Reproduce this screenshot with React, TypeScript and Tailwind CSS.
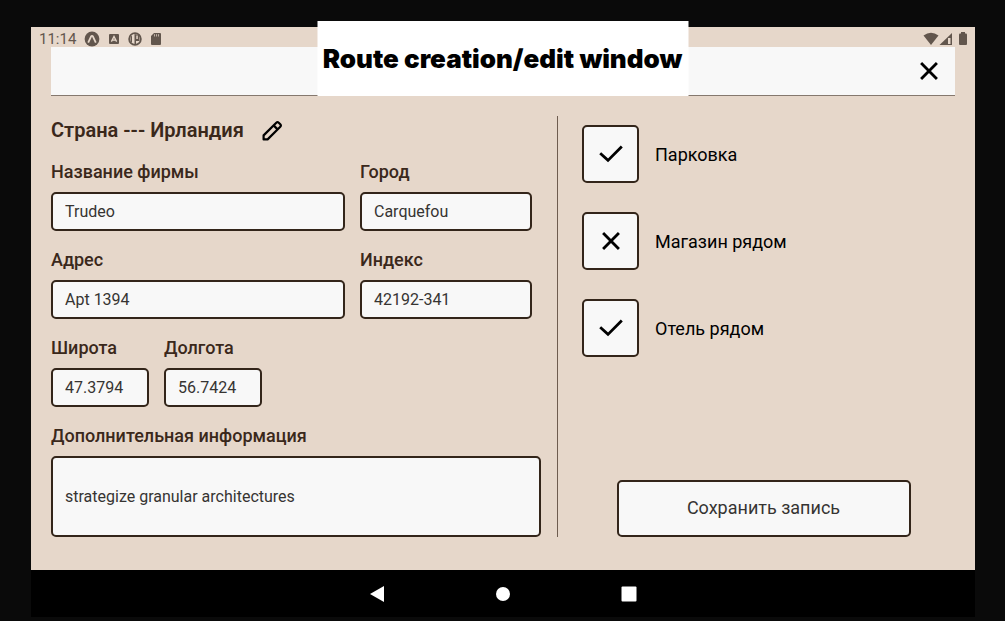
import { useState } from "react";

const FIELD =
  "w-full rounded-[5px] border-2 border-[#33251a] bg-[#f8f8f8] px-3 text-base text-[#363432] outline-none";

type FieldProps = { id: string; label: string; value: string; className: string };

function Field({ id, label, value, className }: FieldProps) {
  return (
    <div className={`flex flex-col gap-2 ${className}`}>
      <label htmlFor={id} className="text-[18px] leading-6 font-medium whitespace-nowrap text-[#3a281b]">
        {label}
      </label>
      <input id={id} defaultValue={value} className={`${FIELD} h-[39px]`} />
    </div>
  );
}

function CloseIcon({ className }: { className: string }) {
  return (
    <svg viewBox="0 0 24 24" className={className} fill="none" stroke="currentColor" strokeWidth="3.4" aria-hidden="true">
      <path d="M2.500 2.500 21.500 21.500M21.500 2.500 2.500 21.500" />
    </svg>
  );
}

function Option({ label, initial }: { label: string; initial: boolean }) {
  const [on, setOn] = useState(initial);
  return (
    <label className="flex items-center gap-4 text-[18px] leading-6 text-black">
      <span className="grid h-[58px] w-[57px] shrink-0 place-items-center">
        <input
          type="checkbox"
          checked={on}
          onChange={() => setOn(!on)}
          className="col-start-1 row-start-1 size-full appearance-none rounded-[5px] border-2 border-[#33251a] bg-[#f8f8f8]"
        />
        <span className="pointer-events-none z-10 col-start-1 row-start-1 text-black">
          {on ? (
            <svg viewBox="0 0 24 18" className="h-[18px] w-6" fill="none" stroke="currentColor" strokeWidth="2.8" aria-hidden="true">
              <path d="M1.2 8.2 9 15.4 22.8 1.6" />
            </svg>
          ) : (
            <CloseIcon className="size-5" />
          )}
        </span>
      </span>
      <span className="pt-0.5">{label}</span>
    </label>
  );
}

function StatusBar() {
  return (
    <div className="flex h-5 items-center justify-between pt-1 pr-2 pl-2 text-[#62564d]">
      <div className="flex items-center">
        <span className="text-[15px] leading-4">11:14</span>
        <svg viewBox="0 0 80 16" className="ml-[7px] h-4 w-20" aria-hidden="true">
          <circle cx="9" cy="8" r="7.4" fill="currentColor" />
          <path d="M5.2 11.6 8 5.6Q9 4 10 5.600L12.800 11.600" fill="none" stroke="#e6d7ca" strokeWidth="1.8" />
          <rect x="26" y="3" width="10" height="10" rx="1" fill="currentColor" />
          <path d="M28.4 10.6 31 5.4 33.6 10.6M29.4 9.2H32.6" fill="none" stroke="#e6d7ca" strokeWidth="1.3" />
          <circle cx="52" cy="8" r="5.900" fill="none" stroke="currentColor" strokeWidth="1.7" />
          <path d="M51.500 3V13.500H53V10H56.500V4Z" fill="currentColor" />
          <path d="M53.300 4.500H54.800V8H53.300Z" fill="#e6d7ca" />
          <path d="M49 4.500V12L47.500 10.500V6Z" fill="currentColor" />
          <path d="M71 2H77Q78 2 78 3V13Q78 14 77 14H69Q68 14 68 13V5Z" fill="currentColor" />
          <path d="M71.500 3.200V5.500M73.500 3.200V5.500M75.500 3.200V5.500" stroke="#e6d7ca" strokeWidth="0.700" />
        </svg>
      </div>
      <svg viewBox="0 0 44 14" className="h-[14px] w-11" aria-hidden="true">
        <path d="M0.500 3.500Q8 -1.800 15.500 3.500L8 13Z" fill="currentColor" />
        <path d="M29 1V13H16.500Z" fill="currentColor" />
        <path d="M25 6H27.500V12H25Z" fill="#e6d7ca" />
        <rect x="36" y="1.500" width="8" height="11.500" rx="1" fill="currentColor" />
        <rect x="38" y="0" width="4" height="3" fill="currentColor" />
      </svg>
    </div>
  );
}

export default function App() {
  return (
    <div className="relative flex min-h-screen flex-col bg-[#0a0a0a] pt-[27px] pr-[30px] pb-1 pl-[31px] font-['Roboto',sans-serif]">
      <div className="flex grow flex-col bg-[#e6d7ca]">
        <StatusBar />
        <header className="mx-5 flex h-[49px] items-center justify-end border-b border-[#85786e] bg-[#f8f8f8] pr-4">
          <button type="button" aria-label="Закрыть" className="text-black">
            <CloseIcon className="size-5" />
          </button>
        </header>

        <main className="mx-5 grid grow grid-cols-[507fr_397fr] pt-5 pb-[33px]">
          <form className="flex min-w-0 flex-col gap-[17px] border-r border-[#6e5c4f] pr-4">
            <div className="-mb-px flex h-7 items-center gap-4">
              <h2 className="text-[20px] leading-7 font-semibold text-[#3a281b]">Страна --- Ирландия</h2>
              <button type="button" aria-label="Изменить страну" className="pt-0.5 text-black">
                <svg viewBox="0 0 24 24" className="size-6" fill="none" stroke="currentColor" strokeWidth="2.200" strokeLinejoin="round" aria-hidden="true">
                  <path d="M3.600 20.400V16.400L16.300 3.700Q17.500 2.500 18.700 3.700L20.300 5.300Q21.500 6.500 20.300 7.700L7.600 20.400Z" />
                  <path d="M13.600 6.400 17.600 10.400" />
                </svg>
              </button>
            </div>
            <div className="flex gap-[15px]">
              <Field id="company" label="Название фирмы" value="Trudeo" className="w-3/5" />
              <Field id="city" label="Город" value="Carquefou" className="w-[35%]" />
            </div>
            <div className="flex gap-[15px]">
              <Field id="address" label="Адрес" value="Apt 1394" className="w-3/5" />
              <Field id="zip" label="Индекс" value="42192-341" className="w-[35%]" />
            </div>
            <div className="flex gap-[15px]">
              <Field id="lat" label="Широта" value="47.3794" className="w-1/5" />
              <Field id="lng" label="Долгота" value="56.7424" className="w-1/5" />
            </div>
            <div className="flex flex-col gap-2">
              <label htmlFor="info" className="text-[18px] leading-6 font-medium text-[#3a281b]">
                Дополнительная информация
              </label>
              <input id="info" defaultValue="strategize granular architectures" className={`${FIELD} h-[81px]`} />
            </div>
          </form>

          <section className="flex min-w-0 flex-col justify-between pt-[9px] pr-[10px] pl-6">
            <div className="flex flex-col gap-[29px]">
              <Option label="Парковка" initial={true} />
              <Option label="Магазин рядом" initial={false} />
              <Option label="Отель рядом" initial={true} />
            </div>
            <button
              type="button"
              className="h-[57px] w-[294px] max-w-full self-center rounded-[5px] border-2 border-[#33251a] bg-[#f8f8f8] pb-0.5 text-[18px] leading-6 text-[#363432]"
            >
              Сохранить запись
            </button>
          </section>
        </main>
      </div>

      <nav className="flex h-[47px] items-center justify-center gap-[110px] bg-black text-white">
        <button type="button" aria-label="Назад">
          <svg viewBox="0 0 16 16" className="size-4" fill="currentColor" aria-hidden="true">
            <path d="M1 8 15 0V16Z" />
          </svg>
        </button>
        <button type="button" aria-label="Домой">
          <svg viewBox="0 0 16 16" className="size-4" fill="currentColor" aria-hidden="true">
            <circle cx="8" cy="8" r="7" />
          </svg>
        </button>
        <button type="button" aria-label="Недавние">
          <svg viewBox="0 0 16 16" className="size-4" fill="currentColor" aria-hidden="true">
            <rect x="0.500" y="0.500" width="15" height="15" rx="1" />
          </svg>
        </button>
      </nav>

      <div className="absolute top-[21px] left-1/2 flex h-[75px] w-[371px] -translate-x-1/2 items-center justify-center bg-white">
        <h1 className="font-['Inter',sans-serif] text-[26px] leading-8 font-black whitespace-nowrap text-black">
          Route creation/edit window
        </h1>
      </div>
    </div>
  );
}
